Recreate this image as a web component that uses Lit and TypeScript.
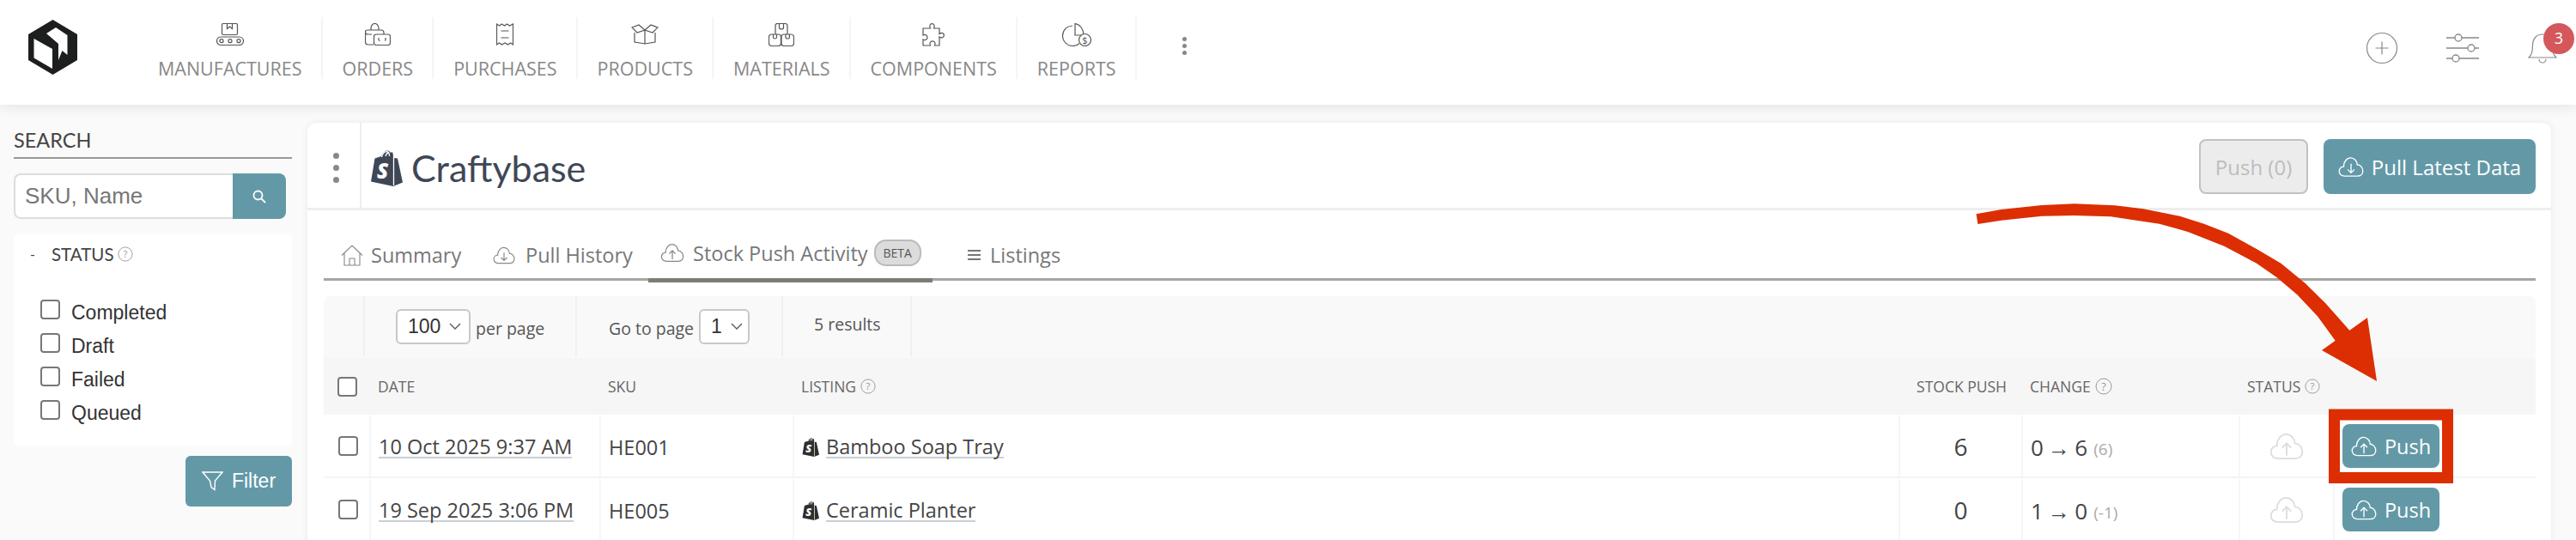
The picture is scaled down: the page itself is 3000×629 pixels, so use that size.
import { LitElement, html, css, svg } from "lit";
import { customElement } from "lit/decorators.js";

const cloudUp = (w: number, h: number, c: string) => html`<svg width=${w} height=${h} viewBox="0 0 24 20" fill="none" stroke=${c} stroke-width="1.1"><path d="M6 18.5C3 18.5 1 16.5 1 14c0-2.6 2-4.4 4.2-4.4C5 5.5 8 1.500 11.500 1.500c3.600 0 6.200 3 6.300 6.300 3 .2 5.200 2.900 5.200 6 0 2.700-2 4.700-5 4.700z"/><path d="M12 16.500V8M8.800 11l3.200-3.200 3.200 3.200"/></svg>`;
const cloudDown = (w: number, h: number, c: string) => html`<svg width=${w} height=${h} viewBox="0 0 24 20" fill="none" stroke=${c} stroke-width="1.1"><path d="M6 18.500C3 18.500 1 16.500 1 14c0-2.600 2-4.400 4.200-4.400C5 5.500 8 1.500 11.500 1.500c3.600 0 6.200 3 6.300 6.300 3 .2 5.200 2.900 5.200 6 0 2.700-2 4.700-5 4.700z"/><path d="M12 7v8.500M8.800 12.300l3.200 3.200 3.200-3.200"/></svg>`;
const help = (s: number) => html`<svg class="help" width=${s} height=${s} viewBox="0 0 20 20"><circle cx="10" cy="10" r="9" fill="none" stroke="#999" stroke-width="1"/><text x="10" y="14.500" text-anchor="middle" font-size="12.500" font-family="Open Sans, sans-serif" fill="#999">?</text></svg>`;
const bag = (w: number, h: number, c: string) => html`<svg width=${w} height=${h} viewBox="0 0 38 42"><path fill=${c} d="M1 36.500 5.500 9.500 13 7C14.500 3 17.500.5 20.500.5c1.700 0 2.600 1 3.200 2.300l2.400-.6L28 9l4 .5L38 37.500 27 42z"/><path fill="none" stroke="#fff" stroke-width="1.300" d="M13.500 8c1-4 3.500-6.300 6-6.300 2 0 3 2 3 5.300M18 7c.8-2.500 2.200-4 3.500-4M27.500 3v38"/><text x="14.500" y="33" text-anchor="middle" font-size="24" font-weight="800" font-style="italic" font-family="Open Sans, sans-serif" fill="#fff">S</text></svg>`;

const navIcons = {
  manufactures: svg`<svg width="32" height="26" viewBox="0 0 32 26"><rect x="6.500" y=".5" width="18" height="13" rx="1.500"/><path d="M12.500 .5v6l3-2.500 3 2.500v-6"/><rect x=".5" y="16" width="31" height="9.500" rx="4.700"/><circle cx="6" cy="20.700" r="2"/><circle cx="16" cy="20.700" r="2"/><circle cx="26" cy="20.700" r="2"/></svg>`,
  orders: svg`<svg width="30" height="26" viewBox="0 0 30 26"><path d="M8 13H3.500Q.5 13 .5 10V10Q.5 8 3.500 8H19Q22 8 22 11V13M.5 10V22Q.5 25 3.500 25H10M7 8V6C7 3 9 .5 11.500 .5S16 3 16 6V8"/><rect x="10.500" y="13" width="19" height="12.500" rx="2.500" fill="#fff"/><path d="M16 17v2q0 1.500 1.500 1.500M24 17v2q0 1-.7 1.500"/></svg>`,
  purchases: svg`<svg width="20" height="26" viewBox="0 0 20 26"><path d="M.5 25V1L3.500 3 6.500 1 9.500 3 12.500 1 15.500 3 19.500 1V25L16.500 23 13.500 25 10 23 6.500 25 3.500 23Z"/><path d="M5.500 9h9M5.500 17h9"/></svg>`,
  products: svg`<svg width="32" height="24" viewBox="0 0 32 24"><path d="M4 10v11l12 2 12-2V10M16 7v16M16 7 9 1 1 4l6 6zM16 7l7-6 8 3-6 6z"/></svg>`,
  materials: svg`<svg width="30" height="27" viewBox="0 0 30 27"><path d="M8 13V3Q8 .5 10.500 .5H19.500Q22 .5 22 3V13M12.500 .5V5q0 2 2.500 2t2.500-2V.5"/><rect x=".5" y="13" width="14" height="13.500" rx="3"/><rect x="15" y="13" width="14.500" height="13.500" rx="3"/><path d="M5.500 13v3.500q0 1.500 2 1.500t2-1.500V13M20 13v3.500q0 1.500 2.200 1.500t2.200-1.500V13"/></svg>`,
  components: svg`<svg width="26" height="27" viewBox="0 0 26 27"><path d="M1 6H9.500C8 3.500 9 .6 11.500 .6S15 3.500 13.500 6H20V12.500C22.500 10.500 25.400 11.500 25.400 14S22.500 18 20 16V26H14.500C16 23.500 14.500 20.800 12 20.800S8 23.500 9.500 26H1V19C3.500 20.500 6 19 6 16.500S3.500 12.500 1 14Z"/></svg>`,
  reports: svg`<svg width="34" height="27" viewBox="0 0 34 27"><path d="M12 3C5 3.500 .5 8.500 .5 14.500 .5 21.500 6 26.500 12.500 26.500c3 0 5.500-1 7.500-2.700"/><path d="M15 .5V14H25C25 7 21 1.500 15 .5Z"/><circle cx="26.500" cy="19.500" r="7" fill="#fff"/><text x="26.500" y="23.500" text-anchor="middle" font-size="11" font-family="Open Sans, sans-serif" fill="#555" stroke="none">$</text></svg>`,
};

const nav: [string, keyof typeof navIcons][] = [
  ["MANUFACTURES", "manufactures"],
  ["ORDERS", "orders"],
  ["PURCHASES", "purchases"],
  ["PRODUCTS", "products"],
  ["MATERIALS", "materials"],
  ["COMPONENTS", "components"],
  ["REPORTS", "reports"],
];

const rows = [
  { date: "10 Oct 2025 9:37 AM", sku: "HE001", name: "Bamboo Soap Tray", push: "6", from: "0 → 6", diff: "(6)" },
  { date: "19 Sep 2025 3:06 PM", sku: "HE005", name: "Ceramic Planter", push: "0", from: "1 → 0", diff: "(-1)" },
];

const arrowShaft =
  "M2301.5 249.3 2330.8 244 2378 239 2415.7 237.3 2463 239.3 2496 243.3 2538.4 251.7 2566.8 260.7 2595 271.7 2628 290 2656.4 306.7 2684.7 330 2708.3 353.3 2732 380 2745 395 2722 400 2698.9 368.3 2675.3 343.3 2651.7 323.3 2628 306.7 2590.3 286.7 2547.9 270 2514.8 260.7 2458.2 252.3 2415.7 251 2378 251.7 2330.8 256.7 2303.4 261Z";

@customElement("app-root")
export class AppRoot extends LitElement {
  static styles = css`
    :host { display: block; position: relative; height: 629px; overflow: hidden; background: #fafafa; font-family: "Open Sans", sans-serif; color: #444; }
    * { box-sizing: border-box; }
    header { height: 122px; background: #fff; display: flex; box-shadow: 0 3px 14px rgba(0,0,0,.09); position: relative; z-index: 1; }
    .logo { width: 161px; padding: 23px 0 0 33px; }
    .nav { display: flex; height: 72px; margin-top: 20px; }
    .nav-item { display: flex; flex-direction: column; align-items: center; padding: 7px 22px 0 23px; border-right: 2px solid #f5f5f5; }
    .nav-icon { flex: none; height: 26px; display: flex; align-items: center; fill: none; stroke: #555; stroke-width: 1.2; }
    .nav-label { flex: none; font-size: 21.5px; line-height: 30px; margin-top: 12px; color: #888; }
    .dots { display: flex; flex-direction: column; gap: 3px; margin: 43px 0 0 53px; }
    .dots i { width: 5px; height: 5px; border-radius: 50%; background: #888; }
    .right { margin-left: auto; display: flex; gap: 57px; padding: 37px 22px 0 0; align-items: flex-start; }
    .bell { position: relative; height: 38px; }
    .badge { position: absolute; left: 18px; top: -10px; width: 36px; height: 36px; border-radius: 50%; background: #d4575c; color: #fff; font-size: 18px; line-height: 34px; text-align: center; }

    main { display: flex; align-items: flex-start; padding: 21px 29px 0 16px; gap: 18px; }
    aside { width: 324px; flex: none; }
    .search-title { font-family: Lato, sans-serif; font-size: 23.5px; line-height: 28px; padding-bottom: 6px; margin-top: 6px; border-bottom: 2px solid #999; color: #444; }
    .search { display: flex; width: 317px; height: 53px; margin-top: 17px; }
    .search-input { flex: 1; border: 2px solid #ddd; border-right: 0; border-radius: 8px 0 0 8px; background: #fff; font-family: "Liberation Sans", sans-serif; font-size: 26px; color: #777; padding: 0 11px; line-height: 48px; }
    .search-btn { width: 62px; background: #6399a7; border-radius: 0 8px 8px 0; display: flex; align-items: center; justify-content: center; }
    .panel { background: #fff; border-radius: 4px; height: 246px; margin-top: 18px; padding: 10px 0 0 19px; }
    .status-head { display: flex; align-items: center; gap: 4px; font-family: Lato, sans-serif; font-size: 20.5px; line-height: 26px; color: #444; }
    .status-head .dash { width: 21px; font-size: 16px; }
    .checks { margin: 43px 0 0 12px; display: flex; flex-direction: column; gap: 16px; }
    .check { display: flex; align-items: center; gap: 13px; font-family: "Liberation Sans", sans-serif; font-size: 23px; line-height: 22px; color: #333; }
    .box { appearance: none; margin: 0; width: 23px; height: 23px; border: 2px solid #777; border-radius: 4px; background: #fff; flex: none; }
    .check .box { position: relative; top: -3px; }
    .filter-row { display: flex; justify-content: flex-end; margin-top: 12px; }
    .filter { width: 124px; height: 59px; background: #6399a7; color: #fff; border-radius: 6px; display: flex; align-items: center; justify-content: center; gap: 10px; font-family: "Liberation Sans", sans-serif; font-size: 23px; }

    .card { flex: 1; background: #fff; border-radius: 10px 10px 0 0; box-shadow: 0 0 8px rgba(0,0,0,.07); height: 600px; padding-bottom: 0; }
    .card-head { height: 102px; border-bottom: 3px solid #eee; display: flex; }
    .menu { width: 63px; border-right: 2px solid #eee; display: flex; flex-direction: column; align-items: center; justify-content: center; gap: 7px; padding: 6px 0 0 5px; }
    .menu i { width: 7px; height: 7px; border-radius: 50%; background: #888; }
    .brand { display: flex; align-items: center; gap: 10px; padding: 6px 0 0 10px; font-family: Lato, sans-serif; font-size: 43px; color: #3f4757; height: 99px; }
    .actions { margin-left: auto; display: flex; gap: 18px; padding: 19px 18px 0 0; }
    .btn { height: 64px; border-radius: 8px; display: flex; align-items: center; justify-content: center; font-size: 24px; }
    .btn.off { width: 127px; background: #ececec; border: 2px solid #c2c2c2; color: #bdbdbd; }
    .btn.on { width: 247px; background: #6399a7; color: #fff; gap: 9px; }

    .tabs { margin: 0 18px 0 19px; height: 82px; border-bottom: 3px solid #a6a6a2; display: flex; padding-left: 20px; position: relative; }
    .tab { display: flex; align-items: center; gap: 9px; height: 82px; font-size: 23.5px; color: #777; padding-top: 27px; padding-bottom: 5px; }
    .tab.t1 { width: 177px; }
    .tab.t2 { width: 181px; gap: 12px; }
    .tab.t3 { width: 331px; padding-left: 14px; border-bottom: 5px solid #7d7d78; height: 84px; padding-bottom: 7px; margin-right: 41px; gap: 10px; }
    .beta { margin-left: -3px; width: 55px; height: 31px; border-radius: 14px; background: #dcdcdc; border: 2px solid #bbb; font-size: 14px; line-height: 27px; text-align: center; color: #555; }
    .burger { width: 15px; height: 12px; border-top: 2px solid #777; border-bottom: 2px solid #777; position: relative; margin-right: 2px; }
    .burger::after { content: ""; position: absolute; left: 0; right: 0; top: 3px; height: 2px; background: #777; }

    .table { margin: 18px 18px 0 19px; }
    .toolbar { height: 72px; background: #f9f9f9; border-radius: 8px 8px 0 0; display: flex; font-size: 19.5px; color: #555; }
    .tool { display: flex; align-items: center; border-left: 2px solid #f0f0f0; height: 70px; }
    .tool.blank { width: 46px; border: 0; }
    .tool.a { width: 247px; padding-left: 36px; gap: 6px; }
    .tool.b { width: 240px; padding-left: 37px; gap: 6px; }
    .tool.c { width: 152px; padding-left: 36px; padding-bottom: 6px; border-right: 2px solid #f0f0f0; }
    .select { height: 41px; background: #fff; border: 2px solid #c8c8c8; border-radius: 6px; display: flex; align-items: center; font-size: 23px; color: #333; font-family: "Liberation Sans", sans-serif; padding-left: 12px; gap: 10px; }
    .select.wide { width: 87px; }
    .select.narrow { width: 59px; }
    .per { padding-top: 4px; }

    .grid { display: grid; grid-template-columns: 55px 268px 225px 1288px 143px 253px 110px 234px; }
    .thead { height: 66px; background: #f6f6f6; align-items: center; font-size: 17.5px; color: #666; }
    .thead > div { display: flex; align-items: center; gap: 5px; padding-left: 8px; }
    .thead > div.first { padding-left: 16px; }
    .thead > div.center { justify-content: center; padding-left: 0; }
    .tr { height: 74px; padding-top: 1px; border-bottom: 2px solid #f4f4f8; }
    .tr > div { display: flex; align-items: center; border-right: 2px solid #f6f6f9; padding-left: 9px; padding-top: 2px; font-size: 23.5px; color: #444; }
    .tr > div.first { padding-left: 17px; padding-top: 0; }
    .tr > div.center { justify-content: center; padding-left: 0; padding-top: 0; }
    .tr > div.last { border-right: 0; padding-left: 9px; padding-top: 0; }
    .link { border-bottom: 2px solid #c9d0d6; line-height: 24px; height: 26px; }
    .listing { display: flex; align-items: center; }
    .listing svg { margin-right: 8px; }
    .num { font-size: 28px; color: #444; }
    .from { font-size: 26px; word-spacing: -1.5px; }
    .diff { font-size: 19px; color: #aaa; margin-left: 7px; padding-top: 4px; }
    .push { width: 113px; height: 51px; border-radius: 8px; background: #6399a7; color: #fff; display: flex; align-items: center; justify-content: center; gap: 9px; font-size: 23.5px; }

    .overlay { position: absolute; left: 0; top: 0; z-index: 2; pointer-events: none; }
  `;

  render() {
    return html`
      <header>
        <div class="logo">
          <svg width="57" height="64" viewBox="0 0 57 64"><path fill="#1d1f1f" d="M28.500 0 57 17V47L28.500 64 0 47V17Z"/><path fill="#fff" d="M6.500 22 28 34V57L6.500 44.500Z"/><path fill="#fff" d="M21 16 32 9 45.500 18V41L39.500 36 35 47V28Z"/></svg>
        </div>
        <nav class="nav">
          ${nav.map(([label, icon]) => html`<div class="nav-item"><div class="nav-icon">${navIcons[icon]}</div><div class="nav-label">${label}</div></div>`)}
        </nav>
        <div class="dots"><i></i><i></i><i></i></div>
        <div class="right">
          <svg width="36" height="38" viewBox="0 0 36 38" fill="none" stroke="#888" stroke-width="1.2"><circle cx="18" cy="19" r="17.500"/><path d="M18 11.500v15M10.500 19h15"/></svg>
          <svg width="38" height="38" viewBox="0 0 38 38" fill="none" stroke="#888" stroke-width="1.300"><path d="M0 7h10M18 7h20M0 19h25M33 19h5M0 31h7M15 31h23"/><circle cx="14" cy="7" r="4"/><circle cx="29" cy="19" r="4"/><circle cx="11" cy="31" r="4"/></svg>
          <div class="bell">
            <svg width="34" height="38" viewBox="0 0 34 38" fill="none" stroke="#888" stroke-width="1.200"><path d="M1 30C5 27 5.500 22 5.500 16 5.500 8 10 3 17 3S28.500 8 28.500 16C28.500 22 29 27 33 30Z"/><path d="M13 32a4 4 0 0 0 8 0"/></svg>
            <div class="badge">3</div>
          </div>
        </div>
      </header>
      <main>
        <aside>
          <div class="search-title">SEARCH</div>
          <div class="search">
            <div class="search-input">SKU, Name</div>
            <div class="search-btn"><svg width="16" height="16" viewBox="0 0 16 16" fill="none" stroke="#fff" stroke-width="1.800"><circle cx="6.500" cy="6.500" r="5"/><path d="M10.500 10.500 15 15"/></svg></div>
          </div>
          <div class="panel">
            <div class="status-head"><span class="dash">-</span><span>STATUS</span>${help(18)}</div>
            <div class="checks">
              ${["Completed", "Draft", "Failed", "Queued"].map((s) => html`<label class="check"><input class="box" type="checkbox" /><span>${s}</span></label>`)}
            </div>
          </div>
          <div class="filter-row">
            <div class="filter"><svg width="25" height="23" viewBox="0 0 25 23" fill="none" stroke="#fff" stroke-width="1.400"><path d="M1 1H24L15.500 11 15 21.500 11 18.500 9.500 11Z"/></svg>Filter</div>
          </div>
        </aside>
        <section class="card">
          <div class="card-head">
            <div class="menu"><i></i><i></i><i></i></div>
            <div class="brand">${bag(38, 42, "#3f4757")}<span>Craftybase</span></div>
            <div class="actions">
              <div class="btn off">Push (0)</div>
              <div class="btn on">${cloudDown(30, 25, "#fff")}Pull Latest Data</div>
            </div>
          </div>
          <div class="tabs">
            <div class="tab t1"><svg width="26" height="25" viewBox="0 0 26 25" fill="none" stroke="#888" stroke-width="1.100"><path d="M1 12.500 13 1l12 11.500M4 10v14h18V10M10 24V16h6v8"/></svg>Summary</div>
            <div class="tab t2">${cloudDown(26, 23, "#888")}<span>Pull History</span></div>
            <div class="tab t3">${cloudUp(28, 23, "#888")}<span>Stock Push Activity</span><span class="beta">BETA</span></div>
            <div class="tab"><span class="burger"></span>Listings</div>
          </div>
          <div class="table">
            <div class="toolbar">
              <div class="tool blank"></div>
              <div class="tool a"><div class="select wide">100 <svg width="14" height="8" viewBox="0 0 14 8" fill="none" stroke="#555" stroke-width="1.300"><path d="M1 1l6 6 6-6"/></svg></div><span class="per">per page</span></div>
              <div class="tool b"><span class="per">Go to page</span><div class="select narrow">1 <svg width="14" height="8" viewBox="0 0 14 8" fill="none" stroke="#555" stroke-width="1.300"><path d="M1 1l6 6 6-6"/></svg></div></div>
              <div class="tool c">5 results</div>
            </div>
            <div class="grid thead">
              <div class="first"><input class="box" type="checkbox" /></div>
              <div>DATE</div>
              <div>SKU</div>
              <div>LISTING ${help(18)}</div>
              <div class="center">STOCK PUSH</div>
              <div>CHANGE ${help(20)}</div>
              <div>STATUS ${help(18)}</div>
              <div></div>
            </div>
            ${rows.map((r) => html`
              <div class="grid tr">
                <div class="first"><input class="box" type="checkbox" /></div>
                <div><span class="link">${r.date}</span></div>
                <div>${r.sku}</div>
                <div><span class="listing">${bag(20, 24, "#2e2e2e")}<span class="link">${r.name}</span></span></div>
                <div class="center"><span class="num">${r.push}</span></div>
                <div><span class="from">${r.from}</span><span class="diff">${r.diff}</span></div>
                <div class="center">${cloudUp(40, 36, "#ddd")}</div>
                <div class="last"><div class="push">${cloudUp(30, 26, "#fff")}Push</div></div>
              </div>`)}
          </div>
        </section>
      </main>
      <svg class="overlay" width="3000" height="629" viewBox="0 0 3000 629">
        <path fill="#dc2e02" d=${arrowShaft}/>
        <path fill="#dc2e02" d="M2757 370 2704 408 2768 444Z"/>
        <rect x="2718.500" y="483" width="132" height="73.500" fill="none" stroke="#dc2e02" stroke-width="13"/>
      </svg>
    `;
  }
}
